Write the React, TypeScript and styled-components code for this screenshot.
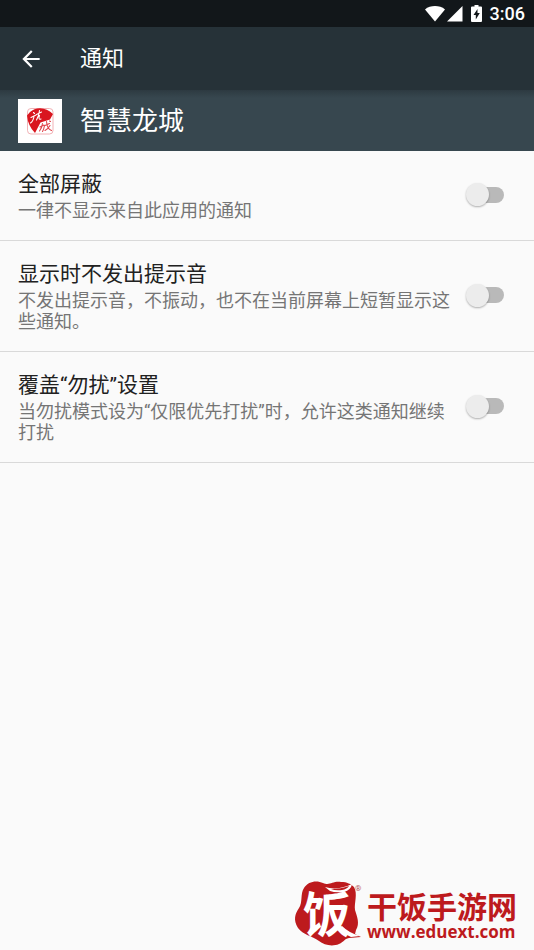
import React, { useState } from "react";
import styled, { createGlobalStyle } from "styled-components";

const GlobalStyle = createGlobalStyle`
  * { box-sizing: border-box; }
  body {
    margin: 0;
    background: #fafafa;
    font-family: Roboto, "Noto Sans CJK SC", sans-serif;
  }
`;

const Screen = styled.div`
  min-height: 100vh;
  display: flex;
  flex-direction: column;
  background: #fafafa;
`;

const StatusBar = styled.div`
  display: flex;
  align-items: center;
  justify-content: flex-end;
  height: 27px;
  padding-right: 9px;
  background: #12171a;
  color: #fff;
`;

const StatusIcons = styled.svg`
  width: 60px;
  height: 18px;
  margin-right: 5px;
`;

const Clock = styled.time`
  font-size: 18px;
  font-weight: 500;
  line-height: 27px;
`;

const AppBar = styled.header`
  display: flex;
  align-items: center;
  height: 63px;
  padding-left: 18px;
  gap: 36px;
  background: #263238;
  color: #fff;
`;

const BackButton = styled.button`
  display: flex;
  width: 26px;
  height: 26px;
  padding: 0;
  border: 0;
  background: none;
  color: inherit;
  cursor: pointer;
`;

const PageTitle = styled.h1`
  margin: 0;
  font-size: 22px;
  font-weight: 400;
  line-height: 30px;
`;

const AppHeader = styled.section`
  display: flex;
  align-items: center;
  height: 61px;
  padding-left: 18px;
  gap: 18px;
  background: linear-gradient(#2d3a41, #37474f 8px);
  color: #fff;
`;

const AppIcon = styled.svg`
  width: 44px;
  height: 44px;
  background: #fff;
`;

const AppName = styled.h2`
  margin: 0;
  font-size: 26px;
  font-weight: 400;
  line-height: 36px;
`;

const SettingRow = styled.label`
  display: flex;
  align-items: center;
  justify-content: space-between;
  padding: 17px 30px 19px 18px;
  gap: 10px;
  border-bottom: 1px solid #d9d9d9;
  cursor: pointer;
`;

const SettingText = styled.span`
  display: flex;
  flex-direction: column;
`;

const SettingTitle = styled.span`
  font-size: 21px;
  line-height: 32px;
  color: #212121;
`;

const SettingSummary = styled.span`
  font-size: 18px;
  line-height: 21px;
  color: #757575;
`;

const Switch = styled.input`
  appearance: none;
  flex: none;
  display: flex;
  align-items: center;
  width: 38px;
  height: 24px;
  margin: 0;
  cursor: pointer;

  &::before {
    content: "";
    width: 32px;
    height: 16px;
    margin-left: 6px;
    flex: none;
    border-radius: 8px;
    background: #b9b9b9;
  }
  &::after {
    content: "";
    width: 23px;
    height: 23px;
    margin-left: -38px;
    flex: none;
    border-radius: 50%;
    background: #ececec;
    box-shadow: 0 1px 2px rgba(0, 0, 0, 0.3);
  }
  &:checked::before { background: #80cbc4; }
  &:checked::after { margin-left: -23px; background: #009688; }
`;

const Brand = styled.footer`
  display: flex;
  align-items: flex-end;
  justify-content: flex-end;
  margin-top: auto;
  padding: 0 17px 4px 0;
  gap: 4px;
  color: #bd1a1d;
`;

const BrandLogo = styled.svg`
  width: 69px;
  height: 66px;
  overflow: visible;
`;

const BrandText = styled.div`
  display: flex;
  flex-direction: column;
  padding-bottom: 4px;
`;

const BrandName = styled.strong`
  font-family: "Noto Sans CJK SC", sans-serif;
  font-size: 30px;
  font-weight: 700;
  line-height: 34px;
`;

const BrandLink = styled.a`
  font-family: "Open Sans", sans-serif;
  font-size: 17px;
  font-weight: 700;
  line-height: 20px;
  color: inherit;
  text-decoration: none;
`;

const settings = [
  { title: "全部屏蔽", summary: "一律不显示来自此应用的通知" },
  {
    title: "显示时不发出提示音",
    summary: "不发出提示音，不振动，也不在当前屏幕上短暂显示这些通知。",
  },
  {
    title: "覆盖“勿扰”设置",
    summary: "当勿扰模式设为“仅限优先打扰”时，允许这类通知继续打扰",
  },
];

function Setting({ title, summary }: { title: string; summary: string }) {
  const [on, setOn] = useState(false);
  return (
    <SettingRow>
      <SettingText>
        <SettingTitle>{title}</SettingTitle>
        <SettingSummary>{summary}</SettingSummary>
      </SettingText>
      <Switch type="checkbox" role="switch" checked={on} onChange={(e) => setOn(e.target.checked)} />
    </SettingRow>
  );
}

export default function App() {
  return (
    <Screen>
      <GlobalStyle />
      <StatusBar>
        <StatusIcons viewBox="0 0 60 18" fill="#fff" aria-hidden="true">
          <path d="M0 4.400C5.500 0 14.500 0 20 4.400L10 16.500Z" />
          <path d="M37.500 1V16.500H22Z" />
          <path
            fillRule="evenodd"
            d="M49.500 0h4v1.500h2.500a1 1 0 0 1 1 1v13.500a1 1 0 0 1-1 1h-9a1 1 0 0 1-1-1V2.500a1 1 0 0 1 1-1h2.500zM52.500 4L48.500 10h2.300v4.500l4-6.500h-2.300z"
          />
        </StatusIcons>
        <Clock>3:06</Clock>
      </StatusBar>
      <AppBar>
        <BackButton aria-label="返回">
          <svg width="26" height="26" viewBox="0 0 24 24" fill="currentColor" aria-hidden="true">
            <path d="M20 11H7.830l5.590-5.590L12 4l-8 8 8 8 1.410-1.410L7.830 13H20v-2z" />
          </svg>
        </BackButton>
        <PageTitle>通知</PageTitle>
      </AppBar>
      <AppHeader>
        <AppIcon viewBox="0 0 44 44" aria-hidden="true">
          <rect x="9.500" y="9.500" width="25.500" height="25.500" rx="3.500" fill="#fff" stroke="#eda0a3" strokeWidth="0.800" />
          <path d="M9 16.500L12 13Q16 9.500 22 9.300Q29 9.500 35 15L32 20.500L22.500 23.500L17 34Q10 27 9 16.500Z" fill="#d9161f" />
          <g fill="none" stroke="#fff" strokeLinecap="round" strokeWidth="1.100">
            <path d="M15.500 13.500l1 1M13 18.500l5-2.500M16 17Q15.500 22 12.500 24M21.500 11.500Q21 17 18.500 21M18.500 15.500l5-2.500M21.500 16.500Q20 21 23 20" />
          </g>
          <g fill="none" stroke="#e0454c" strokeLinecap="round" strokeWidth="1.100">
            <path d="M24.500 24.500Q24 29 21.500 32M22 28l4-2M26.500 26.500Q26 30 24.500 32.500M27 26.500l4.500-2M28.500 22.500Q29 30 33.500 31.500M32 26.500Q30 30 27 31.500M31.500 22l1 .500" />
          </g>
        </AppIcon>
        <AppName>智慧龙城</AppName>
      </AppHeader>
      <main>
        {settings.map((s) => (
          <Setting key={s.title} {...s} />
        ))}
      </main>
      <Brand>
        <BrandLogo viewBox="0 0 69 66" role="img" aria-label="干饭手游网">
          <path
            d="M10 8C14 1 23 0 29 3C36 6 38 1 47 2C53 2 57 4 60 7C64 14 60 23 61 30C63 37 66 43 62 50L61 54L67 57L55 58C50 59 50 62 45 64C38 67 30 65 25 61C18 56 9 55 4 48C-1 40 1 34 5 28C9 22 6 14 10 8Z"
            fill="#bd1a1d"
          />
          <path d="M31 7Q43 11 58 4Q57 10 50 12Q41 13 36 11Z" fill="#fff" />
          <path d="M37 9Q47 9 55 6Q53 9 48 10Q42 11 37 9Z" fill="#bd1a1d" />
          <text
            x="9"
            y="52"
            fill="#fff"
            fontFamily='"Noto Sans CJK SC", sans-serif'
            fontSize="48"
            fontWeight="700"
          >
            饭
          </text>
          <path d="M48 46Q55 53 66 56L57 57Q50 54 46 50Z" fill="#fff" />
          <text x="61" y="11" fill="#b5575b" fontFamily="Roboto, sans-serif" fontSize="8">
            ®
          </text>
        </BrandLogo>
        <BrandText>
          <BrandName>干饭手游网</BrandName>
          <BrandLink href="http://www.eduext.com">www.eduext.com</BrandLink>
        </BrandText>
      </Brand>
    </Screen>
  );
}
